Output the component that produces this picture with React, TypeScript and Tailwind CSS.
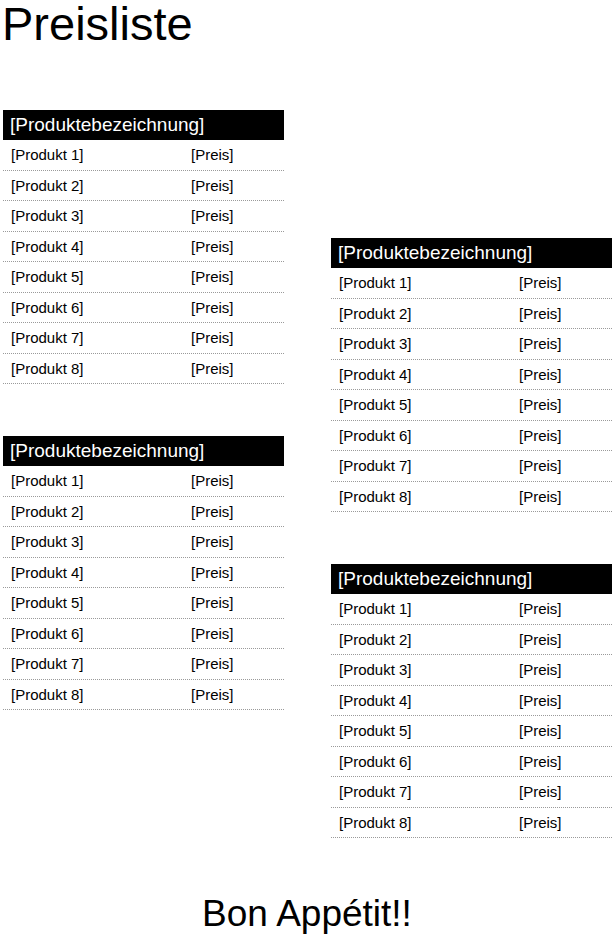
const products = [1, 2, 3, 4, 5, 6, 7, 8].map((n) => `[Produkt ${n}]`);

function PriceSection({ className = "" }: { className?: string }) {
  return (
    <section className={className}>
      <div className="h-[30px] bg-black pl-[7px] text-[19px] leading-[30px] text-white">
        [Produktebezeichnung]
      </div>
      {products.map((p) => (
        <div
          key={p}
          className="flex h-[30.5px] items-center border-b border-dotted border-[#9a9a9a] pl-[8px] pt-px text-[15px] text-black"
        >
          <span className="w-[180px]">{p}</span>
          <span>[Preis]</span>
        </div>
      ))}
    </section>
  );
}

export default function App() {
  return (
    <div
      className="min-h-[937px] w-[614px] bg-white pt-[4px] text-black"
      style={{ fontFamily: '"Liberation Sans", Arial, sans-serif' }}
    >
      <h1 className="pl-[2px] text-[47px] leading-[40px]">Preisliste</h1>

      <div className="flex">
        <div className="ml-[3px] mt-[66px] w-[281px]">
          <PriceSection />
          <PriceSection className="mt-[52px]" />
        </div>
        <div className="ml-[47px] mt-[194px] w-[281px]">
          <PriceSection />
          <PriceSection className="mt-[52px]" />
        </div>
      </div>

      <p className="mt-[57px] text-center text-[37px] leading-none">Bon Appétit!!</p>
    </div>
  );
}
